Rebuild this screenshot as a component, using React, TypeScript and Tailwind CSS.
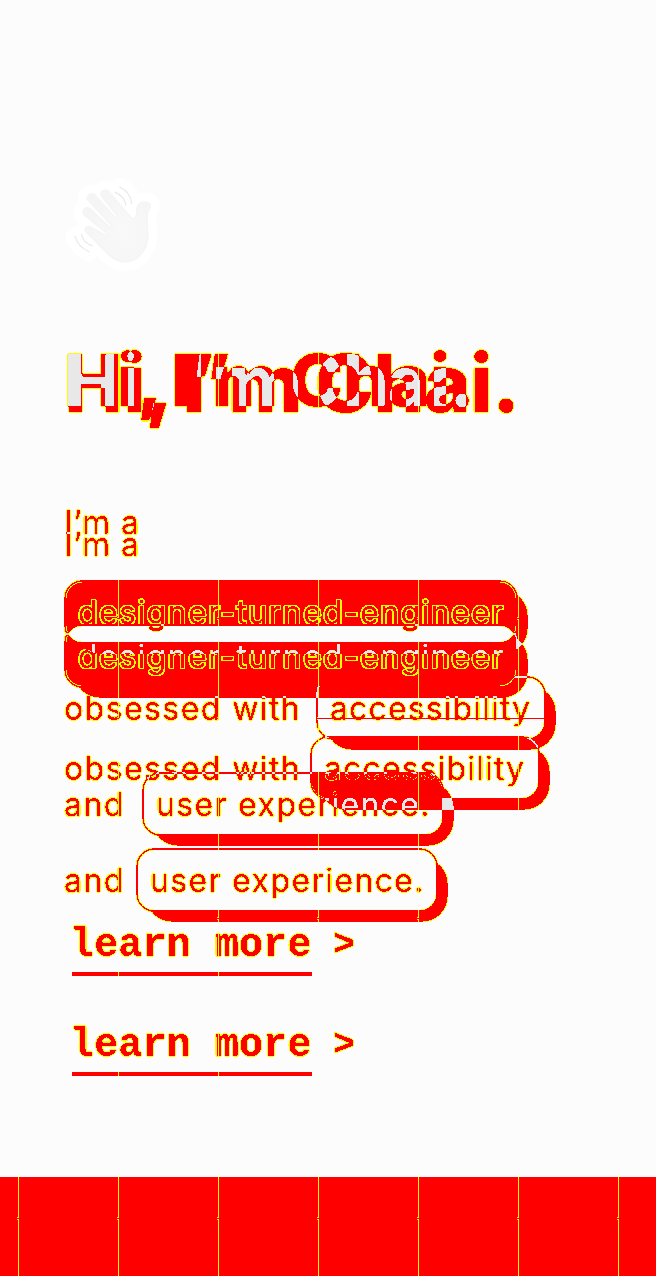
import type { ReactNode } from "react";

// Channel encoding: red = ink, green = highlighted fill, blue = tinted fill.
// Half intensity per layer, so the sum tells one layer from two.

function WavingHand() {
  return (
    <svg viewBox="0 0 390 360" className="absolute left-[50px] top-[165px] h-[120px] w-[130px]" aria-hidden="true">
      <defs>
        <radialGradient id="palm" cx="0.62" cy="0.6" r="0.6">
          <stop offset="0" stopColor="#f9f9f9" />
          <stop offset="1" stopColor="#f5f5f5" />
        </radialGradient>
        <path
          id="hand"
          d="M106 196C104 184 119 182 128 190L174 215C179 220 183 216 178 210L104 151C92 138 105 122 121 132L176 184C182 192 190 188 184 180L114 106C106 92 124 80 136 92L193 155C200 163 207 160 201 151L155 94C148 78 166 69 178 82L240 155C249 166 257 161 260 151L261 133C263 116 276 108 292 112C307 117 300 129 294 139C287 153 293 176 293 207C294 252 267 288 229 290C206 292 190 281 177 270L119 211C111 205 107 202 106 196Z"
        />
        <path id="waves" d="M196 82C212 88 224 102 228 120M209 66C230 76 243 94 245 116M94 208C99 225 111 238 127 242M75 214C81 234 96 251 117 260" fill="none" strokeLinecap="round" />
      </defs>
      <g stroke="#fff" strokeWidth="56" strokeLinejoin="round" fill="#fff">
        <use href="#hand" />
        <use href="#waves" />
      </g>
      <use href="#hand" fill="url(#palm)" stroke="#f5f5f5" strokeWidth="5" />
      <use href="#waves" stroke="#e9e9e9" strokeWidth="3.5" />
    </svg>
  );
}

function Filter() {
  return (
    <svg className="absolute h-0 w-0" aria-hidden="true">
      <filter id="compare" x="0" y="0" width="100%" height="100%" colorInterpolationFilters="sRGB">
        <feComponentTransfer in="SourceGraphic" result="g0">
          <feFuncR type="discrete" tableValues="0 0 0 0 0 0 0 0 0 1 1 1 1 1 1 1 1 1 0.08 0.08" />
          <feFuncG type="discrete" tableValues="0 0 0 0 0 0 0 0 0 0 1 1 1 0 0 0 0 0 0 0" />
          <feFuncB type="discrete" tableValues="0 0 0 0 0 0 0 0 1 1" />
        </feComponentTransfer>
        <feColorMatrix in="g0" result="g1" values="0 0 0 0 0  -1 -1 -1 0 0.99  0 0 0 0 0  0 0 0 0 1" />
        <feComponentTransfer in="SourceGraphic" result="b0">
          <feFuncR type="discrete" tableValues="0 1 1 1 1 1 1 1 1 1 1 1 1 1 1 1 1 1 0.08 0.08" />
          <feFuncG type="discrete" tableValues="0 1 1 1 1 1 1 1 1 1 1 1 1 0 0 0 0 0 0 0" />
          <feFuncB type="discrete" tableValues="0 0 0 0 0 0 0 0 1 1" />
        </feComponentTransfer>
        <feColorMatrix in="b0" result="b1" values="0 0 0 0 0  0 0 0 0 0  -1 -1 -1 0 0.99  0 0 0 0 1" />
        <feComponentTransfer in="SourceGraphic" result="r0">
          <feFuncR type="discrete" tableValues="0.012 0 0 0 0 0 0 0 0 0 0 0 0 0 0 0 0 0 0.09 0.09" />
          <feFuncG type="discrete" tableValues="0 1 1 1 1 1 1 0 0 0" />
        </feComponentTransfer>
        <feColorMatrix in="r0" result="r1" values="-1 0.012 0 0 1  0 0 0 0 0  0 0 0 0 0  0 0 0 0 1" />
        <feBlend in="r1" in2="g1" mode="lighten" result="rg" />
        <feBlend in="rg" in2="b1" mode="lighten" />
      </filter>
    </svg>
  );
}

function Pill({ className, children }: { className: string; children: ReactNode }) {
  return (
    <span className="relative block shrink-0">
      <i className="absolute top-[10px] left-[10px] h-full w-full rounded-[26px] bg-[#800000]" />
      <span className={`relative block h-16 rounded-[18px] border-2 border-[#800000] pl-3 leading-[61px] whitespace-pre ${className}`}>
        {children}
      </span>
    </span>
  );
}

function Before() {
  return (
    <div className="absolute inset-0 flex flex-col bg-black pt-[344px] text-[32px] leading-[65px] tracking-[1.42px] font-normal text-[#800000] [text-shadow:0_0_1px_#800000,0_0_1px_#800000]">
      <h1 className="ml-16 h-[72px] text-[72px] leading-[72px] font-extrabold tracking-[-0.6px] [word-spacing:-3.2px] whitespace-nowrap">Hi, I’m Chai.</h1>
      <p className="mt-[74px] ml-16 h-16 tracking-[0.9px]">I’m a</p>
      <div className="mt-[26px] ml-16 flex h-16">
        <Pill className="w-[454px] bg-[#008000]">designer-turned-engineer</Pill>
      </div>
      <div className="mt-8 ml-16 flex h-16">
        <span className="w-[252px]">obsessed with</span>
        <Pill className="w-[230px] bg-black tracking-[1.12px]">
          <i className="absolute top-[40px] left-0 h-px w-full bg-[#800000]" />
          accessibility
        </Pill>
      </div>
      <div className="mt-8 ml-16 flex h-16">
        <span className="w-[78px]">and</span>
        <Pill className="w-[302px] bg-[#000080] tracking-[1.36px]">user experience.</Pill>
      </div>
      <LearnMore className="mt-[89px]" />
      <div className="mt-[201px] flex-1 bg-[#800000]" />
    </div>
  );
}

function After() {
  return (
    <div className="absolute inset-0 flex flex-col bg-black pt-[343px] text-[32px] leading-[65px] tracking-[1.42px] font-normal text-[#800000] mix-blend-plus-lighter [text-shadow:0_0_1px_#800000,0_0_1px_#800000]">
      <h1 className="ml-16 h-20 text-[80px] leading-[80px] font-extrabold tracking-[-0.7px] [word-spacing:-3.5px] whitespace-nowrap">Hi, I’m Chai.</h1>
      <p className="mt-[89px] ml-16 h-16 tracking-[0.9px]">I’m a</p>
      <div className="mt-12 ml-16 flex h-16">
        <Pill className="w-[454px] bg-[#008000]">designer-turned-engineer</Pill>
      </div>
      <div className="mt-12 ml-16 flex h-16">
        <span className="w-[246px]">obsessed with</span>
        <Pill className="w-[230px] bg-[#000080] tracking-[1.12px]">accessibility</Pill>
      </div>
      <div className="mt-12 ml-16 flex h-16">
        <span className="w-[72px]">and</span>
        <Pill className="w-[302px] bg-black tracking-[1.36px]">user experience.</Pill>
      </div>
      <LearnMore className="mt-[113px]" />
    </div>
  );
}

function LearnMore({ className }: { className: string }) {
  return (
    <a className={`ml-[72px] flex h-[51px] font-['Liberation_Mono',monospace] text-[40px] leading-[41px] font-bold tracking-[0.15px] whitespace-pre ${className}`}>
      <span className="w-[240px] border-b-4 border-[#800000] -indent-[2px]">learn more</span>
      <span className="pl-[21px] text-[36px]">&gt;</span>
    </a>
  );
}

function TileSeams() {
  return (
    <svg className="absolute inset-0 h-full w-full mix-blend-lighten" shapeRendering="crispEdges" aria-hidden="true">
      <pattern id="seams" width="100" height="100" patternUnits="userSpaceOnUse">
        <path d="M18 0h1v18h-1zM18 19h1v81h-1zM17 17h1v1h-1zM17 19h1v1h-1z" fill="#00fc00" />
      </pattern>
      <rect y="318" width="656" height="958" fill="url(#seams)" />
    </svg>
  );
}

export default function App() {
  return (
    <main className="relative isolate h-[1276px] w-[656px] overflow-hidden bg-[#fcfcfc] font-['Inter',sans-serif]">
      <Filter />
      <div className="absolute inset-0 isolate [filter:url(#compare)]">
        <Before />
        <After />
      </div>
      <WavingHand />
      <TileSeams />
    </main>
  );
}
